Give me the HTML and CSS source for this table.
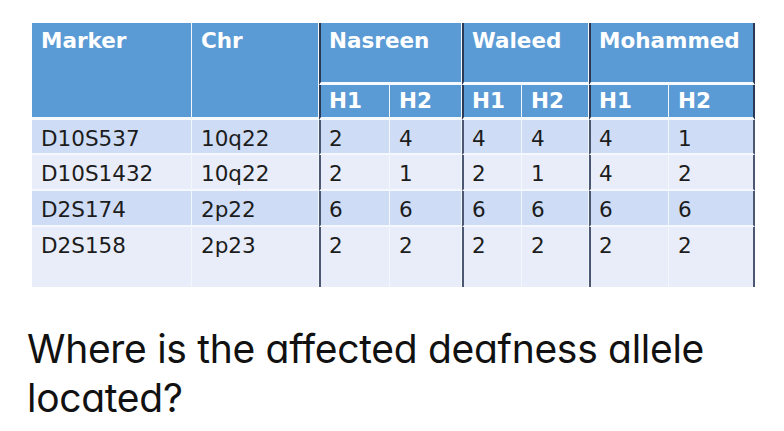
FILE: index.html
```html
<!DOCTYPE html>
<html lang="en">
<head>
<meta charset="utf-8">
<title>Deafness allele markers</title>
<link rel="stylesheet" href="styles.css">
</head>
<body>
<main class="page">
  <div class="geno">
    <div class="c hd span2r">Marker</div>
    <div class="c hd span2r">Chr</div>
    <div class="c hd grp span2c top">Nasreen</div>
    <div class="c hd grp span2c top">Waleed</div>
    <div class="c hd grp span2c top last">Mohammed</div>

    <div class="c hd sub grp">H1</div>
    <div class="c hd sub">H2</div>
    <div class="c hd sub grp">H1</div>
    <div class="c hd sub">H2</div>
    <div class="c hd sub grp">H1</div>
    <div class="c hd sub last">H2</div>

    <div class="c odd">D10S537</div><div class="c odd">10q22</div>
    <div class="c odd grp">2</div><div class="c odd">4</div>
    <div class="c odd grp">4</div><div class="c odd">4</div>
    <div class="c odd grp">4</div><div class="c odd last">1</div>

    <div class="c even">D10S1432</div><div class="c even">10q22</div>
    <div class="c even grp">2</div><div class="c even">1</div>
    <div class="c even grp">2</div><div class="c even">1</div>
    <div class="c even grp">4</div><div class="c even last">2</div>

    <div class="c odd">D2S174</div><div class="c odd">2p22</div>
    <div class="c odd grp">6</div><div class="c odd">6</div>
    <div class="c odd grp">6</div><div class="c odd">6</div>
    <div class="c odd grp">6</div><div class="c odd last">6</div>

    <div class="c even end">D2S158</div><div class="c even end">2p23</div>
    <div class="c even end grp">2</div><div class="c even end">2</div>
    <div class="c even end grp">2</div><div class="c even end">2</div>
    <div class="c even end grp">2</div><div class="c even end last">2</div>
  </div>
  <p class="question">Where is the affected deafness allele located?</p>
</main>
</body>
</html>
```

FILE: styles.css
```css
* { box-sizing: border-box; }
html, body { margin: 0; padding: 0; background: #ffffff; }
.page { padding: 23px 0 0 32px; }

.geno {
  display: grid;
  grid-template-columns: 160px 127px 71px 72px 60px 67px 80px 86px;
  grid-template-rows: 62px 35px 35px 36px 36px 60px;
  width: 723px;
  font-family: "DejaVu Sans", Verdana, sans-serif;
  font-size: 21.5px;
  line-height: 24px;
  color: #1c1c1c;
}

.c {
  padding: 7px 4px 0 9px;
  border-right: 1px solid #f2f6fd;
  border-bottom: 2px solid #f4f7fd;
  white-space: nowrap;
}

.hd {
  background: #5b9bd5;
  color: #ffffff;
  font-weight: bold;
  padding-top: 6px;
  border-bottom: 3px solid #f6f9fe;
}
.span2r { grid-row: span 2; }
.span2c { grid-column: span 2; }
.sub { padding-top: 4px; }

.odd { background: #cfdcf6; }
.even { background: #e8edf9; }
.end { border-bottom: none; }

.grp {
  border-left: 2px solid #2b3954;
  padding-left: 8px;
}
.odd.grp, .even.grp { border-left-color: #4c5872; }
.last { border-right: 2px solid #2b3954; }
.odd.last, .even.last { border-right-color: #4c5872; }

.question {
  margin: 37px 0 0 -5px;
  width: 740px;
  font-family: Inter, "Noto Sans", sans-serif;
  font-feature-settings: "cv11" 1;
  font-size: 39px;
  line-height: 49px;
  letter-spacing: -0.3px;
  color: #111111;
}
```
